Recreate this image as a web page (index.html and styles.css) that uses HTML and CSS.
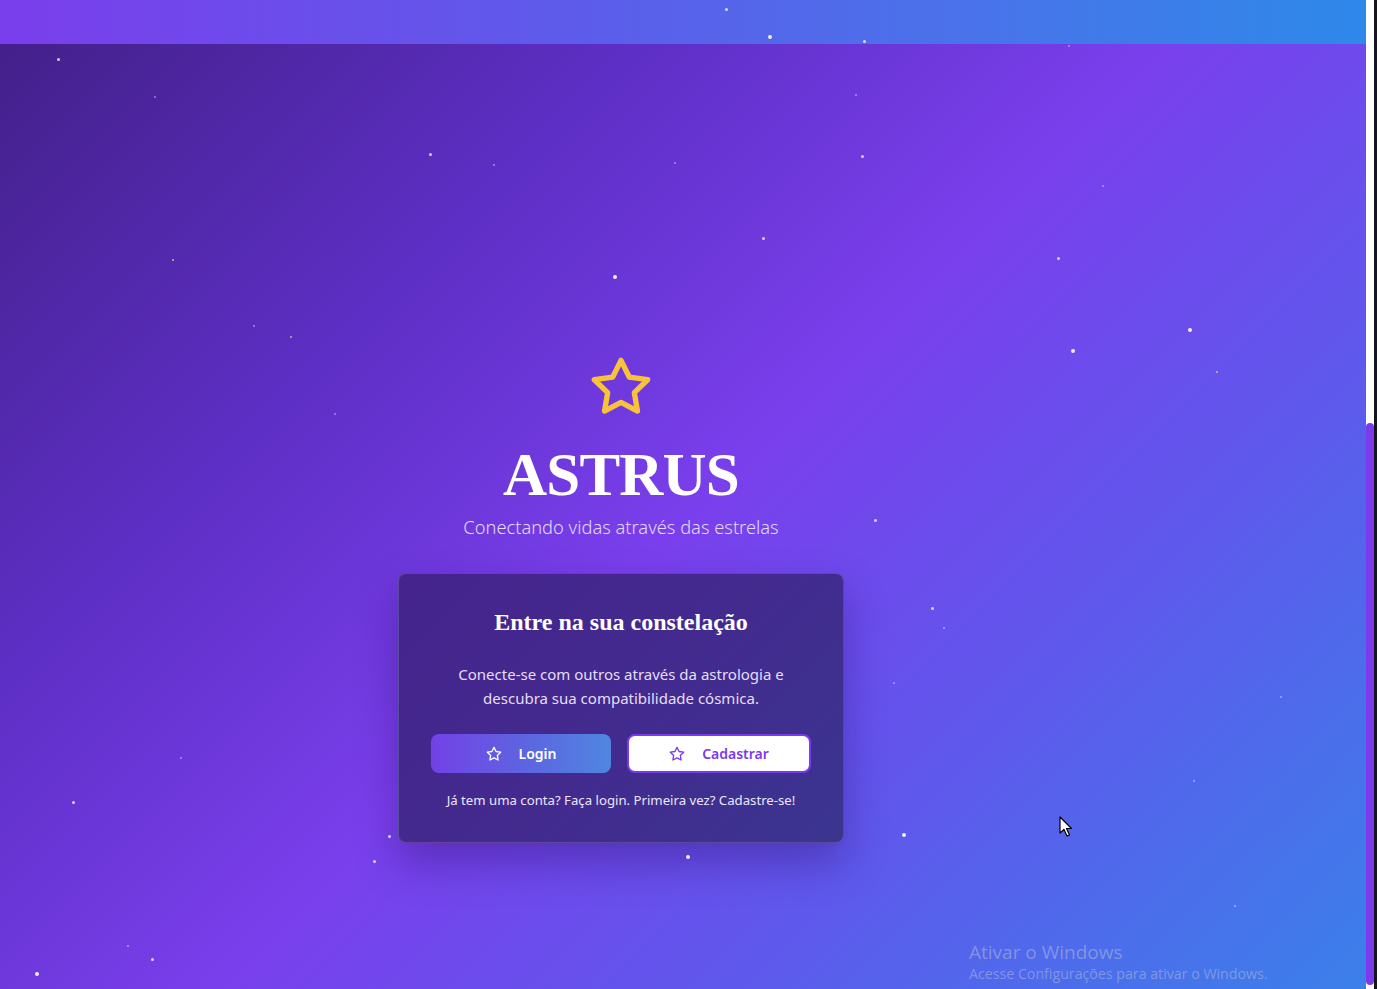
FILE: index.html
```html
<!DOCTYPE html>
<html lang="pt-BR">
<head>
<meta charset="utf-8">
<title>Astrus</title>
<link rel="stylesheet" href="styles.css">
</head>
<body>
<div class="window">
  <div class="page">
    <header class="topbar"></header>
    <main class="hero">
      <div class="hero-inner">
        <svg class="logo-star" viewBox="0 0 24 24" width="64" height="64" fill="none" stroke="#f7c23c" stroke-width="2" stroke-linejoin="round" stroke-linecap="round"><polygon points="12 2 15.09 8.26 22 9.27 17 14.14 18.18 21.02 12 17.77 5.82 21.02 7 14.14 2 9.27 8.91 8.26 12 2"/></svg>
        <h1 class="brand">ASTRUS</h1>
        <p class="tagline">Conectando vidas através das estrelas</p>
        <section class="card">
          <h2 class="card-title">Entre na sua constelação</h2>
          <p class="card-text">Conecte-se com outros através da astrologia e descubra sua compatibilidade cósmica.</p>
          <div class="actions">
            <button class="btn btn-primary"><svg viewBox="0 0 24 24" width="16" height="16" fill="none" stroke="currentColor" stroke-width="2" stroke-linejoin="round"><polygon points="12 2 15.09 8.26 22 9.27 17 14.14 18.18 21.02 12 17.77 5.82 21.02 7 14.14 2 9.27 8.91 8.26 12 2"/></svg><span>Login</span></button>
            <button class="btn btn-outline"><svg viewBox="0 0 24 24" width="16" height="16" fill="none" stroke="currentColor" stroke-width="2" stroke-linejoin="round"><polygon points="12 2 15.09 8.26 22 9.27 17 14.14 18.18 21.02 12 17.77 5.82 21.02 7 14.14 2 9.27 8.91 8.26 12 2"/></svg><span>Cadastrar</span></button>
          </div>
          <p class="card-note">Já tem uma conta? Faça login. Primeira vez? Cadastre-se!</p>
        </section>
      </div>
    </main>
    <div class="stars">
      <i class="s" style="left:725px;top:8px"></i>
      <i class="s b" style="left:768px;top:35px"></i>
      <i class="s" style="left:863px;top:40px"></i>
      <i class="s d" style="left:1068px;top:45px"></i>
      <i class="s" style="left:57px;top:58px"></i>
      <i class="s d" style="left:154px;top:96px"></i>
      <i class="s d" style="left:855px;top:94px"></i>
      <i class="s" style="left:429px;top:153px"></i>
      <i class="s d" style="left:493px;top:164px"></i>
      <i class="s d" style="left:674px;top:162px"></i>
      <i class="s" style="left:861px;top:155px"></i>
      <i class="s d" style="left:1102px;top:185px"></i>
      <i class="s" style="left:762px;top:237px"></i>
      <i class="s b" style="left:613px;top:275px"></i>
      <i class="s" style="left:1057px;top:257px"></i>
      <i class="s y" style="left:172px;top:259px"></i>
      <i class="s d" style="left:253px;top:325px"></i>
      <i class="s y" style="left:290px;top:336px"></i>
      <i class="s b" style="left:1188px;top:328px"></i>
      <i class="s b" style="left:1071px;top:349px"></i>
      <i class="s y" style="left:1216px;top:371px"></i>
      <i class="s d" style="left:334px;top:413px"></i>
      <i class="s" style="left:874px;top:519px"></i>
      <i class="s" style="left:931px;top:607px"></i>
      <i class="s d" style="left:943px;top:627px"></i>
      <i class="s d" style="left:893px;top:682px"></i>
      <i class="s d" style="left:1280px;top:696px"></i>
      <i class="s d" style="left:180px;top:757px"></i>
      <i class="s" style="left:72px;top:801px"></i>
      <i class="s d" style="left:1193px;top:780px"></i>
      <i class="s" style="left:388px;top:835px"></i>
      <i class="s b" style="left:902px;top:833px"></i>
      <i class="s" style="left:373px;top:860px"></i>
      <i class="s b" style="left:686px;top:855px"></i>
      <i class="s d" style="left:1234px;top:905px"></i>
      <i class="s d" style="left:127px;top:945px"></i>
      <i class="s" style="left:151px;top:958px"></i>
      <i class="s b" style="left:35px;top:972px"></i>
    </div>
    <div class="watermark">
      <div class="wm-title">Ativar o Windows</div>
      <div class="wm-sub">Acesse Configurações para ativar o Windows.</div>
    </div>
    <svg class="cursor" width="14" height="22" viewBox="0 0 14 22"><path d="M1 1 L1 17 L5 13.5 L8 20 L10.5 19 L7.5 12.5 L12.5 12.5 Z" fill="#fff" stroke="#000" stroke-width="1.2" stroke-linejoin="round"/></svg>
  </div>
  <div class="scrollbar"><div class="thumb"></div></div>
  <div class="frame-edge"></div>
</div>
</body>
</html>
```
FILE: styles.css
```css
* { box-sizing: border-box; }
html, body { margin: 0; padding: 0; height: 100%; overflow: hidden; }
body { font-family: "Noto Sans", "Open Sans", sans-serif; background: #15151c; }

.window { display: flex; width: 1377px; height: 989px; }

.page {
  position: relative;
  width: 1366px;
  height: 989px;
  display: flex;
  flex-direction: column;
  overflow: hidden;
}

.topbar {
  height: 44px;
  flex: none;
  background: linear-gradient(90deg, #7a3eec 0%, #5f5aea 40%, #4a72ea 70%, #2e89e9 100%);
}

.hero {
  flex: 1;
  background: linear-gradient(135deg, #43208a 0%, #5e2fc6 28%, #7a3fec 50%, #5f58ec 72%, #3b80ea 100%);
  padding-right: 124px;
}

.hero-inner {
  display: flex;
  flex-direction: column;
  align-items: center;
  padding-top: 311px;
}

.logo-star { display: block; }

.brand {
  margin: 20px 0 0;
  font-family: "Liberation Serif", "Times New Roman", serif;
  font-weight: 700;
  font-size: 61px;
  line-height: 72px;
  letter-spacing: -0.8px;
  color: #ffffff;
}

.tagline {
  margin: 2px 0 0;
  font-size: 18.3px;
  line-height: 28px;
  font-weight: 300;
  color: #e3d9fb;
}

.card {
  margin-top: 32px;
  width: 446px;
  padding: 32px;
  border-radius: 8px;
  border: 1px solid rgba(255, 255, 255, 0.14);
  background: linear-gradient(135deg, #45248d 0%, #432a8e 50%, #3a3590 100%);
  box-shadow: 0 20px 40px rgba(40, 10, 100, 0.35);
  text-align: center;
}

.card-title {
  margin: 0;
  font-family: "Liberation Serif", "Times New Roman", serif;
  font-weight: 700;
  font-size: 24px;
  line-height: 32px;
  color: #ffffff;
}

.card-text {
  margin: 24px 0 0;
  font-size: 15px;
  line-height: 24px;
  color: #e6def8;
}

.actions {
  display: flex;
  gap: 16px;
  margin-top: 24px;
}

.btn {
  flex: 1;
  height: 39px;
  display: flex;
  align-items: center;
  justify-content: center;
  gap: 17px;
  border-radius: 8px;
  font-family: inherit;
  font-size: 14px;
  font-weight: 600;
  cursor: pointer;
}

.btn-primary {
  border: none;
  color: #ffffff;
  background: linear-gradient(90deg, #7341e6 0%, #5a6ae0 60%, #4f86e0 100%);
}

.btn-outline {
  border: 2px solid #7c3aed;
  background: #ffffff;
  color: #7c3aed;
}

.card-note {
  margin: 17px 0 0;
  font-size: 13.2px;
  line-height: 20px;
  color: #ece6fa;
}

.stars { position: absolute; inset: 0; pointer-events: none; }
.s {
  position: absolute;
  width: 3px;
  height: 3px;
  border-radius: 50%;
  background: rgba(255, 255, 255, 0.75);
}
.s.b { width: 4px; height: 4px; background: rgba(255, 255, 255, 0.9); }
.s.d { width: 2px; height: 2px; background: rgba(255, 255, 255, 0.45); }
.s.y { width: 2px; height: 2px; background: rgba(252, 211, 77, 0.8); }

.watermark {
  position: absolute;
  left: 969px;
  top: 940px;
  color: rgba(200, 200, 215, 0.45);
  font-family: "Open Sans", "Noto Sans", sans-serif;
}
.wm-title { font-size: 19px; line-height: 24px; }
.wm-sub { font-size: 14.2px; line-height: 20px; }

.cursor { position: absolute; left: 1059px; top: 816px; }

.scrollbar {
  width: 8px;
  height: 989px;
  background: #ffffff;
  padding-top: 423px;
  padding-bottom: 4px;
}
.thumb {
  height: 100%;
  background: #7c3aed;
  border-radius: 4px;
}
.frame-edge { width: 3px; background: #15151c; }
```
